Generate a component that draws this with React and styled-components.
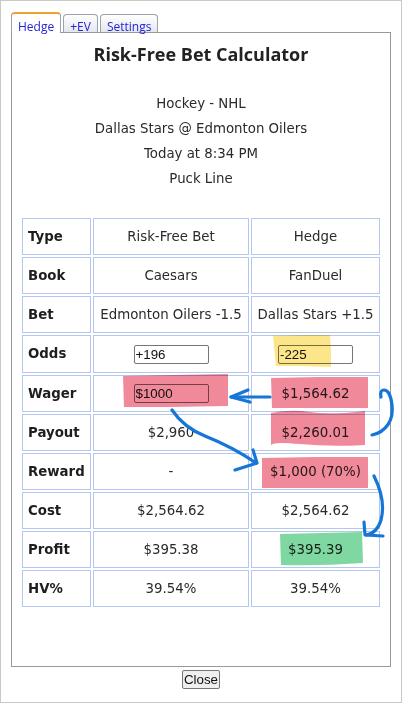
import React from "react";
import styled, { createGlobalStyle } from "styled-components";

const rows = [
  { label: "Type", a: "Risk-Free Bet", b: "Hedge" },
  { label: "Book", a: "Caesars", b: "FanDuel" },
  { label: "Bet", a: "Edmonton Oilers -1.5", b: "Dallas Stars +1.5" },
  { label: "Odds", a: { input: "+196" }, b: { input: "-225" } },
  { label: "Wager", a: { input: "$1000" }, b: "$1,564.62" },
  { label: "Payout", a: "$2,960", b: "$2,260.01" },
  { label: "Reward", a: "-", b: "$1,000 (70%)" },
  { label: "Cost", a: "$2,564.62", b: "$2,564.62" },
  { label: "Profit", a: "$395.38", b: "$395.39" },
  { label: "HV%", a: "39.54%", b: "39.54%" },
];

const renderValue = (v) =>
  typeof v === "string" ? v : <OddsInput defaultValue={v.input} />;

export default function App() {
  return (
    <>
      <GlobalStyle />
      <Window>
        <Tabs>
          <Tab $active>Hedge</Tab>
          <Tab>+EV</Tab>
          <Tab>Settings</Tab>
        </Tabs>
        <Panel>
          <Title>Risk-Free Bet Calculator</Title>
          <Info>
            <div>Hockey - NHL</div>
            <div>Dallas Stars @ Edmonton Oilers</div>
            <div>Today at 8:34 PM</div>
            <div>Puck Line</div>
          </Info>
          <Table>
            <colgroup>
              <col style={{ width: 69 }} />
              <col style={{ width: 156 }} />
              <col style={{ width: 129 }} />
            </colgroup>
            <tbody>
              {rows.map((r) => (
                <tr key={r.label}>
                  <Label>{r.label}</Label>
                  <Cell>{renderValue(r.a)}</Cell>
                  <Cell>{renderValue(r.b)}</Cell>
                </tr>
              ))}
            </tbody>
          </Table>
        </Panel>
        <CloseButton>Close</CloseButton>

        {/* hand-drawn markup on top of the screenshot */}
        <Marks width="402" height="703" viewBox="0 0 402 703">
          <g style={{ mixBlendMode: "multiply" }}>
            <path d="M273,336 L302,335 L330,335 L331,351 L331,367 L300,366 L276,366 Z" fill="#fde68a" />
            <path d="M123,376 L175,375 L228,374 L228,390 L228,406 L170,407 L124,407 Z" fill="#f0899a" />
            <path d="M271,378 L320,377 L368,377 L368,408 L318,408 L272,408 Z" fill="#f0899a" />
            <path d="M271,413 Q290,409 310,412 T365,411 L365,445 Q330,447 300,444 T271,446 Z" fill="#f0899a" />
            <path d="M262,458 L315,457 L368,457 L368,488 L262,488 Z" fill="#f0899a" />
            <path d="M280,534 L362,532 L363,563 Q320,566 281,565 Z" fill="#7fd8a2" />
          </g>
          <g fill="none" stroke="#1676d8" strokeWidth="3.2" strokeLinecap="round" strokeLinejoin="round">
            <path d="M270,397 L231,397" />
            <path d="M248,390 L231,397 L250,402" />
            <path d="M172,410 C180,422 190,430 205,436 C225,444 240,452 256,463" />
            <path d="M253,450 L257,463 L235,470" />
            <path d="M372,435 C386,432 394,420 392,405 C391,396 388,390 384,390 C381,390 380,393 381,397" />
            <path d="M374,476 C380,488 385,505 381,520 C378,530 372,534 366,535" />
            <path d="M364,522 L365,535 L383,536" />
          </g>
        </Marks>
      </Window>
    </>
  );
}

const GlobalStyle = createGlobalStyle`
  body {
    margin: 0;
    background: #fff;
    font-family: "DejaVu Sans", Verdana, sans-serif;
  }
`;

const Window = styled.div`
  position: relative;
  width: 402px;
  height: 703px;
  box-sizing: border-box;
  border: 1px solid #c9c9c9;
  padding: 11px 0 0 10px;
  display: flex;
  flex-direction: column;
`;

const Tabs = styled.div`
  display: flex;
  align-items: flex-end;
  gap: 2px;
  height: 21px;
  margin-bottom: -1px;
  position: relative;
  z-index: 1;
`;

const Tab = styled.div`
  box-sizing: border-box;
  height: ${(p) => (p.$active ? "21px" : "18px")};
  margin-bottom: ${(p) => (p.$active ? "0" : "1px")};
  padding: ${(p) => (p.$active ? "4.5px" : "3.5px")} 6px 0;
  font-family: "Open Sans", sans-serif;
  font-size: 12px;
  line-height: 16px;
  white-space: nowrap;
  color: #2323d8;
  border: 1px solid #9aa3ad;
  border-bottom: none;
  border-top: ${(p) => (p.$active ? "2px solid #f0a030" : "1px solid #9aa3ad")};
  border-radius: 4px 4px 0 0;
  background: ${(p) =>
    p.$active ? "#fff" : "linear-gradient(#ffffff, #e4e7ee)"};
`;

const Panel = styled.div`
  box-sizing: border-box;
  width: 380px;
  height: 635px;
  border: 1px solid #999;
  display: flex;
  flex-direction: column;
  align-items: center;
`;

const Title = styled.h1`
  margin: 9px 0 0;
  font-family: "Open Sans", sans-serif;
  font-size: 18px;
  font-weight: 700;
  line-height: 24px;
  color: #222;
`;

const Info = styled.div`
  margin-top: 25px;
  text-align: center;
  font-size: 13.33px;
  line-height: 25px;
  color: #2a2a2a;
`;

const Table = styled.table`
  margin-top: 25px;
  width: 362px;
  table-layout: fixed;
  border-collapse: separate;
  border-spacing: 2px;
  font-size: 13.33px;
  color: #2a2a2a;
`;

const Cell = styled.td`
  border: 1px solid #b3c7ef;
  padding: 10px 4px;
  line-height: 15px;
  text-align: center;
  white-space: nowrap;
`;

const Label = styled(Cell)`
  text-align: left;
  padding-left: 5px;
  font-weight: 700;
  color: #1e1e1e;
`;

const OddsInput = styled.input`
  box-sizing: border-box;
  width: 75px;
  height: 19px;
  margin: -2px 0;
  vertical-align: middle;
  padding: 0 1px;
  border: 1px solid #767676;
  border-radius: 2px;
  font-family: "Liberation Sans", Arial, sans-serif;
  font-size: 13.33px;
  color: #111;
  background: #fff;
`;

const CloseButton = styled.button`
  align-self: center;
  margin: 3px 0 0 -10px;
  box-sizing: border-box;
  height: 19px;
  padding: 0 1px;
  border: 1px solid #767676;
  border-radius: 2px;
  background: #efefef;
  font-family: "Liberation Sans", Arial, sans-serif;
  font-size: 13.33px;
  line-height: 15px;
  color: #111;
`;

const Marks = styled.svg`
  position: absolute;
  left: -1px;
  top: -1px;
  pointer-events: none;
`;
